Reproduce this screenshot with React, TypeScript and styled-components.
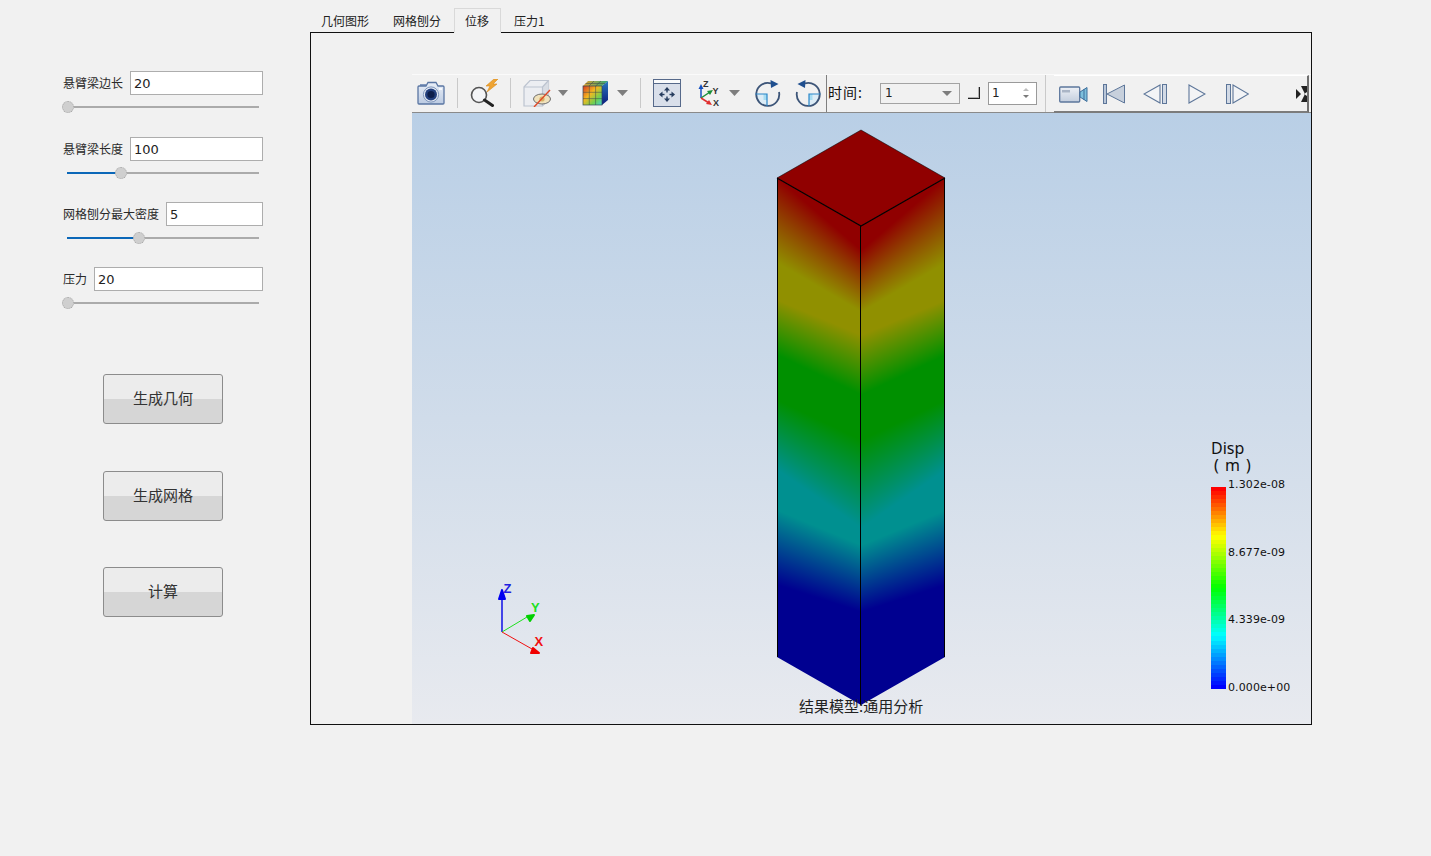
import React, { useMemo } from "react";
import styled, { createGlobalStyle } from "styled-components";

const CJK = `"Noto Sans CJK SC", "Noto Sans", sans-serif`;
const LATIN = `"DejaVu Sans", "Noto Sans CJK SC", sans-serif`;

const Global = createGlobalStyle`
  html, body { margin: 0; padding: 0; background: #f1f1f1; }
  * { box-sizing: border-box; }
`;

const Page = styled.div`
  width: 1431px;
  height: 856px;
  background: #f1f1f1;
  display: grid;
  grid-template-columns: 310px 1002px;
  font-family: ${CJK};
  color: #222;
  overflow: hidden;
`;

const Sidebar = styled.aside`
  padding: 71px 47px 0 63px;
  display: flex;
  flex-direction: column;
`;

const Field = styled.div<{ $after: number }>`
  margin-bottom: ${(p) => p.$after}px;
`;

const FieldRow = styled.div`
  display: flex;
  align-items: center;
  gap: 7px;
  height: 24px;
`;

const FieldLabel = styled.label`
  font-size: 12px;
  line-height: 24px;
  color: #2a2a2a;
  white-space: nowrap;
`;

const TextInput = styled.input`
  flex: 1;
  min-width: 0;
  height: 24px;
  border: 1px solid #adadad;
  background: #fff;
  padding: 1px 0 0 3px;
  font: 13px ${LATIN};
  color: #222;
  outline: none;
`;

const Track = styled.div`
  position: relative;
  height: 2px;
  width: 192px;
  margin: 11px 0 0 4px;
  background: #ababab;
`;

const TrackFill = styled.div<{ $w: number }>`
  width: ${(p) => p.$w}px;
  height: 100%;
  background: #0b67b8;
`;

const Thumb = styled.div<{ $pos: number }>`
  position: absolute;
  top: -5px;
  left: ${(p) => p.$pos - 6}px;
  width: 12px;
  height: 12px;
  border-radius: 50%;
  background: #cfcfcf;
  border: 1px dotted #a8a8a8;
`;

const Actions = styled.div`
  margin: 70px 0 0 40px;
  display: flex;
  flex-direction: column;
  gap: 46.5px;
`;

const ActionButton = styled.button`
  width: 120px;
  height: 50px;
  border: 1px solid #8c8c8c;
  border-radius: 3px;
  background: linear-gradient(#ececec 0, #ececec 50%, #d6d6d6 50%, #d6d6d6 100%);
  font: 15px ${CJK};
  color: #333;
  padding: 0 0 3px;
`;

const Workspace = styled.main`
  padding-top: 8px;
  display: flex;
  flex-direction: column;
`;

const TabBar = styled.div`
  display: flex;
  height: 25px;
  position: relative;
  z-index: 1;
  margin-bottom: -1px;
`;

const Tab = styled.div<{ $active?: boolean }>`
  height: 25px;
  padding: 0 11px 0 10px;
  margin-right: ${(p) => (p.$active ? 2 : 1)}px;
  font-size: 12px;
  line-height: 23px;
  color: #222;
  border: 1px solid ${(p) => (p.$active ? "#d9d9d9" : "transparent")};
  border-bottom-color: ${(p) => (p.$active ? "#f1f1f1" : "transparent")};
  background: ${(p) => (p.$active ? "#f1f1f1" : "transparent")};
`;

const Frame = styled.section`
  width: 1002px;
  height: 693px;
  border: 1px solid #111;
  padding: 41px 0 0 101px;
  display: flex;
  flex-direction: column;
`;

const Toolbar = styled.div`
  height: 39px;
  flex: none;
  display: flex;
  align-items: center;
  padding: 0 0 1px 5px;
  border-top: 1px solid #fafafa;
  border-bottom: 1px solid #8a8a8a;
`;

const Tool = styled.span<{ $gap?: number }>`
  display: flex;
  align-items: center;
  flex: none;
  margin-left: ${(p) => p.$gap ?? 0}px;
`;

const Sep = styled.span<{ $gap: number; $dark?: boolean; $tall?: boolean }>`
  flex: none;
  width: 1px;
  margin-left: ${(p) => p.$gap}px;
  height: ${(p) => (p.$tall ? 37 : 30)}px;
  background: ${(p) => (p.$dark ? "#7f7f7f" : "#c9c9c9")};
`;

const TimeLabel = styled.span`
  flex: none;
  margin-left: 1px;
  width: 52px;
  font-size: 14px;
  line-height: 18px;
  letter-spacing: 1px;
  padding-bottom: 2px;
  color: #111;
  white-space: nowrap;
`;

const Combo = styled.div`
  flex: none;
  width: 80px;
  height: 21px;
  border: 1px solid #a3a3a3;
  background: #f1f1f1;
  display: flex;
  align-items: center;
  justify-content: space-between;
  padding: 0 7px 0 4px;
  font: 12px ${LATIN};
`;

const ComboCaret = styled.span`
  width: 0;
  height: 0;
  border-left: 5px solid transparent;
  border-right: 5px solid transparent;
  border-top: 5px solid #7d7d7d;
`;

const CheckMark = styled.span`
  flex: none;
  margin-left: 8px;
  width: 12px;
  height: 12px;
  border-right: 1px solid #222;
  border-bottom: 1px solid #222;
  box-shadow: inset -1px -1px 0 #b0b0b0;
`;

const Spin = styled.div`
  flex: none;
  margin-left: 8px;
  width: 49px;
  height: 23px;
  border: 1px solid #9a9a9a;
  background: #fff;
  display: flex;
  align-items: center;
  justify-content: space-between;
  padding: 0 7px 0 3px;
  font: 12px ${LATIN};
`;

const SpinArrows = styled.span`
  display: flex;
  flex-direction: column;
  gap: 4px;
`;

const SpinArrow = styled.span<{ $up?: boolean }>`
  width: 0;
  height: 0;
  border-left: 3px solid transparent;
  border-right: 3px solid transparent;
  ${(p) => (p.$up ? "border-bottom: 3px solid #bdbdbd;" : "border-top: 3px solid #7a7a7a;")}
`;

const PlayerBar = styled.div`
  flex: none;
  margin-left: 8px;
  width: 255px;
  height: 38px;
  align-self: flex-start;
  display: flex;
  align-items: center;
  padding: 0 0 0 5px;
  background: #f1f1f1;
  border-top: 1px solid #fff;
  border-right: 2px solid #6f6f6f;
  border-bottom: 2px solid #7c7c7c;
`;

const EndTool = styled(Tool)`
  margin-left: auto;
`;

const Viewport = styled.div`
  position: relative;
  flex: 1;
  min-height: 0;
  background: linear-gradient(#b9cfe6 0%, #d0dcea 50%, #e8eaef 100%);
  overflow: hidden;
`;

const Scene = styled.svg`
  display: block;
`;

const Caption = styled.div`
  position: absolute;
  left: 387px;
  top: 583px;
  width: 124px;
  font-size: 15px;
  line-height: 20px;
  text-align: center;
  color: #222;
  white-space: nowrap;
`;

const Legend = styled.div`
  position: absolute;
  left: 799px;
  top: 327px;
  color: #111;
`;

const LegendTitle = styled.div`
  font: 16px/16px "Noto Sans", ${CJK};
  height: 16px;
`;

const LegendUnit = styled.div`
  font: 16px/16px "Noto Sans", ${CJK};
  height: 16px;
  margin-top: 1px;
  padding-left: 3px;
  word-spacing: 2px;
  white-space: pre;
`;

const LegendBody = styled.div`
  display: flex;
  gap: 2px;
  margin-top: 14px;
  height: 202px;
`;

const LegendTicks = styled.div`
  display: flex;
  flex-direction: column;
  justify-content: space-between;
  margin: -9px 0 -6px;
  font: 11px/14px ${LATIN};
  letter-spacing: 0.1px;
  white-space: nowrap;
`;

const Ramp = styled.svg`
  display: block;
  flex: none;
`;

const Tick = styled.span`
  display: block;
`;

type RGB = [number, number, number];
const R: RGB = [144, 0, 0];
const O: RGB = [144, 144, 0];
const G: RGB = [0, 144, 0];
const T: RGB = [0, 144, 144];
const B: RGB = [0, 0, 144];
const colours = [R, O, O, G, G, T, T, B, B];
const edgeStops = [178, 263, 300, 355, 400, 470, 510, 585, 660];
const centreStops = [250, 312, 335, 395, 440, 528, 545, 612, 705];
const rgb = (c: RGB) => `rgb(${c[0]},${c[1]},${c[2]})`;

function Beam() {
  const cols = useMemo(() => {
    const out: { x: number; stops: { o: number; c: string }[] }[] = [];
    for (let x = 777; x < 945; x++) {
      const t = x < 861 ? (x - 777) / 84 : (945 - x) / 84;
      out.push({
        x,
        stops: colours.map((c, i) => ({
          o: (edgeStops[i] + (centreStops[i] - edgeStops[i]) * t - 130) / 580,
          c: rgb(c),
        })),
      });
    }
    return out;
  }, []);
  return (
    <g>
      <defs>
        {cols.map((c) => (
          <linearGradient key={c.x} id={`col${c.x}`} gradientUnits="userSpaceOnUse" x1="0" y1="130" x2="0" y2="710">
            {c.stops.map((s, i) => (
              <stop key={i} offset={s.o} stopColor={s.c} />
            ))}
          </linearGradient>
        ))}
        <clipPath id="beamClip">
          <polygon points="777,178 861,226 945,178 945,657 861,705 777,657" />
        </clipPath>
      </defs>
      <g clipPath="url(#beamClip)" shapeRendering="crispEdges">
        {cols.map((c) => (
          <rect key={c.x} x={c.x} y={170} width={1} height={540} fill={`url(#col${c.x})`} />
        ))}
      </g>
      <polygon points="861,130 945,178 861,226 777,178" fill="#900000" />
      <polyline points="777,178 861,130 945,178" fill="none" stroke="#000" strokeOpacity=".55" strokeWidth="1" />
      <polyline points="777,178 861,226 945,178" fill="none" stroke="#000" strokeWidth="1.2" />
      <g fill="#000" shapeRendering="crispEdges">
        <rect x="777" y="178" width="1" height="479" />
        <rect x="860" y="226" width="1" height="479" />
        <rect x="944" y="178" width="1" height="479" />
      </g>
    </g>
  );
}

function Triad() {
  return (
    <g>
      <line x1="502" y1="632" x2="502" y2="597" stroke="#0000e6" strokeWidth="1.4" />
      <polygon points="502,590 499,599 505,599" fill="#0000f0" stroke="#0000f0" strokeWidth="2" strokeLinejoin="round" />
      <line x1="502" y1="632" x2="527" y2="617" stroke="#1ee01e" strokeWidth="1" />
      <polygon points="534,615 527,616 530,621" fill="#00d000" stroke="#00d000" strokeWidth="2" strokeLinejoin="round" />
      <line x1="502" y1="632" x2="532" y2="649" stroke="#f01010" strokeWidth="1" />
      <polygon points="539,653 533,648 531,653" fill="#f00000" stroke="#f00000" strokeWidth="2" strokeLinejoin="round" />
      <text x="503.5" y="593" fontFamily="'Liberation Sans', sans-serif" fontWeight="700" fontSize="13" fill="#2020e0">Z</text>
      <text x="531" y="612" fontFamily="'Liberation Sans', sans-serif" fontWeight="700" fontSize="13" fill="#20e020">Y</text>
      <text x="534.5" y="646" fontFamily="'Liberation Sans', sans-serif" fontWeight="700" fontSize="13" fill="#f01010">X</text>
    </g>
  );
}

function rampColour(t: number): string {
  const stops: [number, RGB][] = [
    [0, [255, 0, 0]],
    [0.24, [255, 255, 0]],
    [0.5, [0, 255, 0]],
    [0.74, [0, 255, 255]],
    [1, [0, 0, 255]],
  ];
  for (let i = 0; i < stops.length - 1; i++) {
    const [a, ca] = stops[i];
    const [b, cb] = stops[i + 1];
    if (t <= b) {
      const k = (t - a) / (b - a);
      return rgb([0, 1, 2].map((j) => Math.round(ca[j] + (cb[j] - ca[j]) * k)) as RGB);
    }
  }
  return "rgb(0,0,255)";
}

function LegendRamp() {
  const n = 50;
  return (
    <Ramp width="15" height="202" viewBox="0 0 15 202" shapeRendering="crispEdges">
      {Array.from({ length: n }, (_, i) => (
        <rect key={i} x="0" y={(i * 202) / n} width="15" height={202 / n + 0.5} fill={rampColour(i / (n - 1))} />
      ))}
    </Ramp>
  );
}

const CameraIcon = () => (
  <svg width="28" height="24" viewBox="0 0 28 24">
    <defs>
      <linearGradient id="camBody" x1="0" y1="0" x2="0" y2="1">
        <stop offset="0" stopColor="#e9eff8" />
        <stop offset="1" stopColor="#bccbe2" />
      </linearGradient>
    </defs>
    <path d="M3 5 V3 H9 V5z" fill="#8399bd" />
    <path d="M2 5 H9 L11 1.5 H19 L21 5 H26 Q27 5 27 6 V22 Q27 23 26 23 H2 Q1 23 1 22 V6 Q1 5 2 5z" fill="url(#camBody)" stroke="#5a76a3" strokeWidth="1.3" />
    <circle cx="14" cy="13.5" r="7.6" fill="#e5ebf5" stroke="#7e95bb" />
    <circle cx="14" cy="13.5" r="6" fill="#23407e" />
    <circle cx="14" cy="13.5" r="3.6" fill="#0d1f4c" />
    <rect x="22" y="7" width="3" height="2" fill="#f7fafe" />
  </svg>
);

const SearchBoltIcon = () => (
  <svg width="29" height="28" viewBox="0 0 29 28">
    <circle cx="9" cy="16" r="7.5" fill="#f4f5f7" stroke="#555" strokeWidth="1.6" />
    <line x1="14.5" y1="21" x2="22.5" y2="26.5" stroke="#222" strokeWidth="3" strokeLinecap="round" />
    <path d="M24 0 L16 7 H20 L17 13 L27 5 H23 L28 0z" fill="#efa534" stroke="#d98a1c" strokeWidth=".6" />
  </svg>
);

const HiddenBoxIcon = () => (
  <svg width="29" height="28" viewBox="0 0 29 28">
    <path d="M1 8 L7 1.5 H25.5 V20 L19.5 27 H1z" fill="#eceef2" stroke="#bcc3cf" strokeWidth="1.2" />
    <path d="M19.5 8 L25.5 1.5 V20 L19.5 27z" fill="#d9dde4" />
    <path d="M1 8 H19.5 V27 M19.5 8 L25.5 1.5" fill="none" stroke="#bcc3cf" strokeWidth="1.2" />
    <ellipse cx="19" cy="20" rx="8.5" ry="5" fill="#f0e2bc" stroke="#6f6f6f" />
    <circle cx="19" cy="20" r="2.6" fill="#d8b368" />
    <line x1="11" y1="28" x2="27" y2="11" stroke="#e04a28" strokeWidth="1.4" />
  </svg>
);

const ResultCubeIcon = () => (
  <svg width="27" height="26" viewBox="0 0 27 26">
    <defs>
      <linearGradient id="cubeFront" x1="0" y1="0" x2="1" y2="1">
        <stop offset="0" stopColor="#d83820" />
        <stop offset=".4" stopColor="#f4b820" />
        <stop offset=".72" stopColor="#70d050" />
        <stop offset="1" stopColor="#40d0d8" />
      </linearGradient>
      <linearGradient id="cubeSide" x1="0" y1="0" x2="0" y2="1">
        <stop offset="0" stopColor="#2a78c0" />
        <stop offset="1" stopColor="#0b1d7c" />
      </linearGradient>
      <linearGradient id="cubeTop" x1="0" y1="0" x2="1" y2="0">
        <stop offset="0" stopColor="#e0a030" />
        <stop offset="1" stopColor="#30a878" />
      </linearGradient>
    </defs>
    <path d="M1 6 L6 1 H26 L20 6z" fill="url(#cubeTop)" />
    <path d="M20 6 L26 1 V20 L20 25z" fill="url(#cubeSide)" />
    <rect x="1" y="6" width="19" height="19" fill="url(#cubeFront)" />
    <path d="M7.3 6V25M13.6 6V25M1 12.3H20M1 18.6H20M7 6L12 1M13.6 6L19 1M3.5 3.5H23" stroke="#3d4a4a" strokeOpacity=".6" strokeWidth=".9" fill="none" />
    <rect x="1" y="6" width="19" height="19" fill="none" stroke="#33485a" strokeWidth=".7" />
  </svg>
);

const FitIcon = () => (
  <svg width="28" height="28" viewBox="0 0 28 28">
    <rect x=".5" y=".5" width="27" height="27" fill="#d9dfea" stroke="#56698a" />
    <rect x="1" y="1" width="26" height="3" fill="#fafbfc" />
    <line x1="1" y1="4.5" x2="27" y2="4.5" stroke="#56698a" />
    <g fill="#263c5e">
      <polygon points="14,8 17,11.5 11,11.5" />
      <rect x="13.3" y="11" width="1.4" height="2.5" />
      <polygon points="14,23 17,19.5 11,19.5" />
      <rect x="13.3" y="17.5" width="1.4" height="2.5" />
      <polygon points="6,15.5 9.5,12.5 9.5,18.5" />
      <rect x="9" y="14.8" width="2.5" height="1.4" />
      <polygon points="22,15.5 18.5,12.5 18.5,18.5" />
      <rect x="16.5" y="14.8" width="2.5" height="1.4" />
    </g>
  </svg>
);

const AxesIcon = () => (
  <svg width="26" height="28" viewBox="0 0 26 28">
    <line x1="4" y1="19" x2="4" y2="8" stroke="#1450c0" strokeWidth="1.5" />
    <polygon points="4,5 1.5,10 6.5,10" fill="#1450c0" />
    <line x1="4" y1="19" x2="13" y2="13" stroke="#1a8f3a" strokeWidth="1.5" />
    <polygon points="16,11 10,12 13,16" fill="#1a8f3a" />
    <line x1="4" y1="19" x2="12" y2="24" stroke="#e03030" strokeWidth="1.5" />
    <polygon points="15,26 9,25 12,21" fill="#e03030" />
    <text x="6" y="8" fontSize="9" fontWeight="700" fontFamily="'Liberation Sans', sans-serif" fill="#333">Z</text>
    <text x="15.5" y="15" fontSize="9" fontWeight="700" fontFamily="'Liberation Sans', sans-serif" fill="#333">Y</text>
    <text x="16" y="27" fontSize="9" fontWeight="700" fontFamily="'Liberation Sans', sans-serif" fill="#333">X</text>
  </svg>
);

const RotateIcon = ({ mirrored }: { mirrored?: boolean }) => (
  <svg width="27" height="28" viewBox="0 0 27 28">
    <g transform={mirrored ? "translate(27,0) scale(-1,1)" : undefined}>
      <path d="M13 15 H2 A11.5 11.5 0 0 0 13 26.5z" fill="#dcecf6" />
      <path d="M9.5 15 H13 V21 H9.5z" fill="#a6dcf2" />
      <path d="M25 13 A11.5 11.5 0 1 1 17 4.4" fill="none" stroke="#3d5578" strokeWidth="1.8" />
      <polygon points="16.5,1 24.5,5 17,9" fill="#1f4f8f" />
      <path d="M1.5 15 H13 V27" fill="none" stroke="#2a86c8" strokeWidth="1.2" />
    </g>
  </svg>
);

const CaretIcon = ({ w }: { w: number }) => (
  <svg width={w} height="6" viewBox={`0 0 ${w} 6`}>
    <polygon points={`0,0 ${w},0 ${w / 2},6`} fill="#7e7e7e" />
  </svg>
);

const VideoIcon = () => (
  <svg width="29" height="18" viewBox="0 0 29 18">
    <defs>
      <linearGradient id="vidBody" x1="0" y1="0" x2="0" y2="1">
        <stop offset="0" stopColor="#eef1f6" />
        <stop offset="1" stopColor="#c3cede" />
      </linearGradient>
    </defs>
    <rect x=".7" y="2" width="20" height="15" rx="1" fill="url(#vidBody)" stroke="#5c779c" strokeWidth="1.3" />
    <rect x="3" y="5" width="8" height="2.5" fill="#aab5c6" />
    <path d="M21 7 L28 2.5 V16.5 L21 12z" fill="#7ec0dc" stroke="#3f6f9c" />
    <line x1="25" y1="4" x2="25" y2="15" stroke="#3f6f9c" />
  </svg>
);

const stroke = "#5d7699";

const FirstIcon = () => (
  <svg width="22" height="20" viewBox="0 0 22 20">
    <rect x=".5" y=".5" width="3" height="19" fill="#b9c6d8" stroke={stroke} />
    <path d="M21.5 1 L4 10 L21.5 19z" fill="#c7d0dc" stroke={stroke} />
  </svg>
);

const PrevIcon = () => (
  <svg width="24" height="20" viewBox="0 0 24 20">
    <path d="M17 1 L1 10 L17 19z" fill="#f3f4f6" stroke={stroke} strokeWidth="1.1" />
    <rect x="19.5" y=".5" width="4" height="19" fill="#d2dae6" stroke={stroke} />
  </svg>
);

const PlayIcon = () => (
  <svg width="18" height="20" viewBox="0 0 18 20">
    <path d="M1 1 L17 10 L1 19z" fill="#f3f4f6" stroke={stroke} strokeWidth="1.1" />
  </svg>
);

const NextIcon = () => (
  <svg width="23" height="20" viewBox="0 0 23 20">
    <rect x=".5" y=".5" width="4" height="19" fill="#d2dae6" stroke={stroke} />
    <path d="M7 1 L22.5 10 L7 19z" fill="#f3f4f6" stroke={stroke} strokeWidth="1.1" />
  </svg>
);

const MoreIcon = () => (
  <svg width="11" height="18" viewBox="0 0 11 18">
    <defs>
      <filter id="moreBlur"><feGaussianBlur stdDeviation=".5" /></filter>
    </defs>
    <g filter="url(#moreBlur)" fill="#222">
      <path d="M0 4 L5 9 L0 14z" />
      <path d="M5 1 H11 V7 L8 9 L11 11 V17 H5 L9 9z" />
    </g>
  </svg>
);

const sliders = [
  { label: "悬臂梁边长", value: "20", pos: 1, fill: 0, after: 29 },
  { label: "悬臂梁长度", value: "100", pos: 54, fill: 54, after: 28 },
  { label: "网格刨分最大密度", value: "5", pos: 72, fill: 72, after: 28 },
  { label: "压力", value: "20", pos: 1, fill: 0, after: 0 },
];

export default function App() {
  return (
    <Page>
      <Global />
      <Sidebar>
        {sliders.map((s) => (
          <Field key={s.label} $after={s.after}>
            <FieldRow>
              <FieldLabel>{s.label}</FieldLabel>
              <TextInput defaultValue={s.value} />
            </FieldRow>
            <Track>
              <TrackFill $w={s.fill} />
              <Thumb $pos={s.pos} />
            </Track>
          </Field>
        ))}
        <Actions>
          <ActionButton>生成几何</ActionButton>
          <ActionButton>生成网格</ActionButton>
          <ActionButton>计算</ActionButton>
        </Actions>
      </Sidebar>
      <Workspace>
        <TabBar>
          <Tab>几何图形</Tab>
          <Tab>网格刨分</Tab>
          <Tab $active>位移</Tab>
          <Tab>压力1</Tab>
        </TabBar>
        <Frame>
          <Toolbar>
            <Tool><CameraIcon /></Tool>
            <Sep $gap={12} />
            <Tool $gap={12}><SearchBoltIcon /></Tool>
            <Sep $gap={11} />
            <Tool $gap={12}><HiddenBoxIcon /></Tool>
            <Tool $gap={6}><CaretIcon w={10} /></Tool>
            <Tool $gap={14}><ResultCubeIcon /></Tool>
            <Tool $gap={8}><CaretIcon w={11} /></Tool>
            <Sep $gap={12} />
            <Tool $gap={12}><FitIcon /></Tool>
            <Tool $gap={16}><AxesIcon /></Tool>
            <Tool $gap={6}><CaretIcon w={11} /></Tool>
            <Tool $gap={14}><RotateIcon /></Tool>
            <Tool $gap={14}><RotateIcon mirrored /></Tool>
            <Sep $gap={4} $dark $tall />
            <TimeLabel>时间:</TimeLabel>
            <Combo>1<ComboCaret /></Combo>
            <CheckMark />
            <Spin>
              1
              <SpinArrows>
                <SpinArrow $up />
                <SpinArrow />
              </SpinArrows>
            </Spin>
            <Sep $gap={8} $tall />
            <PlayerBar>
              <Tool><VideoIcon /></Tool>
              <Tool $gap={15}><FirstIcon /></Tool>
              <Tool $gap={18}><PrevIcon /></Tool>
              <Tool $gap={21}><PlayIcon /></Tool>
              <Tool $gap={20}><NextIcon /></Tool>
              <EndTool><MoreIcon /></EndTool>
            </PlayerBar>
          </Toolbar>
          <Viewport>
            <Scene width="899" height="611" viewBox="412 113 899 611">
              <Beam />
              <Triad />
            </Scene>
            <Caption>结果模型:通用分析</Caption>
            <Legend>
              <LegendTitle>Disp</LegendTitle>
              <LegendUnit>( m )</LegendUnit>
              <LegendBody>
                <LegendRamp />
                <LegendTicks>
                  <Tick>1.302e-08</Tick>
                  <Tick>8.677e-09</Tick>
                  <Tick>4.339e-09</Tick>
                  <Tick>0.000e+00</Tick>
                </LegendTicks>
              </LegendBody>
            </Legend>
          </Viewport>
        </Frame>
      </Workspace>
    </Page>
  );
}
